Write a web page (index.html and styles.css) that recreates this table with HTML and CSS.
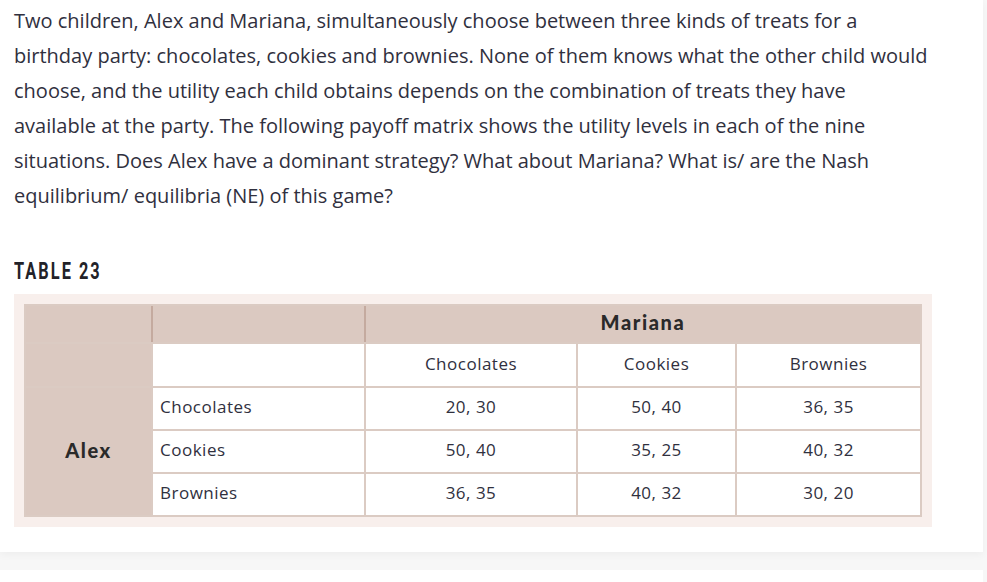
FILE: index.html
```html
<!DOCTYPE html>
<html lang="en">
<head>
<meta charset="utf-8">
<title>Table 23</title>
<link rel="stylesheet" href="styles.css">
</head>
<body>
<main class="card">
  <p class="question">Two children, Alex and Mariana, simultaneously choose between three kinds of treats for a birthday party: chocolates, cookies and brownies. None of them knows what the other child would choose, and the utility each child obtains depends on the combination of treats they have available at the party. The following payoff matrix shows the utility levels in each of the nine situations. Does Alex have a dominant strategy? What about Mariana? What is/ are the Nash equilibrium/ equilibria (NE) of this game?</p>
  <h2 class="table-title"><span class="table-title-text">TABLE 23</span></h2>
  <div class="table-frame">
    <table class="payoff">
      <colgroup>
        <col class="c-player">
        <col class="c-label">
        <col class="c-choc">
        <col class="c-cook">
        <col class="c-brown">
      </colgroup>
      <tr class="row-head">
        <th class="player-cell"></th>
        <th class="head-cell sep"></th>
        <th class="head-cell sep player-name" colspan="3">Mariana</th>
      </tr>
      <tr class="row-sub">
        <td class="player-cell"></td>
        <td class="cell"></td>
        <td class="cell center">Chocolates</td>
        <td class="cell center">Cookies</td>
        <td class="cell center">Brownies</td>
      </tr>
      <tr class="row-data">
        <th class="player-cell player-name" rowspan="3">Alex</th>
        <td class="cell label">Chocolates</td>
        <td class="cell center">20, 30</td>
        <td class="cell center">50, 40</td>
        <td class="cell center">36, 35</td>
      </tr>
      <tr class="row-data">
        <td class="cell label">Cookies</td>
        <td class="cell center">50, 40</td>
        <td class="cell center">35, 25</td>
        <td class="cell center">40, 32</td>
      </tr>
      <tr class="row-data">
        <td class="cell label">Brownies</td>
        <td class="cell center">36, 35</td>
        <td class="cell center">40, 32</td>
        <td class="cell center">30, 20</td>
      </tr>
    </table>
  </div>
</main>
<div class="next-card"></div>
</body>
</html>
```

FILE: styles.css
```css
html, body {
  margin: 0;
  padding: 0;
}
body {
  background: #f7f7f7;
  font-family: "Open Sans", Lato, sans-serif;
  color: #30303e;
}
.card {
  width: 983px;
  box-sizing: border-box;
  background: #ffffff;
  padding: 3px 0 25px 14px;
  box-shadow: 0 3px 8px rgba(0, 0, 0, 0.04);
}
.question {
  margin: 0;
  width: 916px;
  font-size: 20px;
  line-height: 35px;
  font-weight: 400;
}
.table-title {
  margin: 44px 0 9px 0;
  height: 28px;
  line-height: 28px;
  font-family: Roboto, sans-serif;
  font-weight: 700;
  font-size: 24px;
  color: #222228;
}
.table-title-text {
  display: inline-block;
  letter-spacing: 3px;
  transform: scaleX(0.68);
  transform-origin: left center;
}
.table-frame {
  width: 918px;
  box-sizing: border-box;
  padding: 10px;
  background: #f8efec;
}
.payoff {
  width: 898px;
  table-layout: fixed;
  border-collapse: separate;
  border-spacing: 2px;
  background: #dbcbc3;
  font-size: 17px;
  letter-spacing: 0.5px;
  color: #30303e;
}
.c-player { width: 125px; }
.c-label { width: 211px; }
.c-choc { width: 210px; }
.c-cook { width: 157px; }
.c-brown { width: 183px; }
.payoff th, .payoff td {
  padding: 0 0 4px 0;
}
.row-head th { height: 36px; padding: 0; }
.row-sub td { height: 38px; }
.row-data td { height: 37px; }
.player-cell {
  background: #dbc9c1;
}
.head-cell {
  background: #dbc9c1;
}
.sep {
  box-shadow: -2px 0 0 0 #c4aa9f;
}
.player-name {
  font-family: Lato, sans-serif;
  font-weight: 900;
  font-size: 20px;
  letter-spacing: 1.6px;
  color: #2a2a2a;
  text-align: center;
  vertical-align: middle;
}
.row-head .player-name {
  vertical-align: top;
  line-height: 33px;
}
.cell {
  background: #ffffff;
  vertical-align: middle;
}
.center {
  text-align: center;
}
.payoff .label {
  text-align: left;
  padding-left: 7px;
}
.next-card {
  margin-top: 18px;
  width: 983px;
  height: 40px;
  background: #ffffff;
}
```
